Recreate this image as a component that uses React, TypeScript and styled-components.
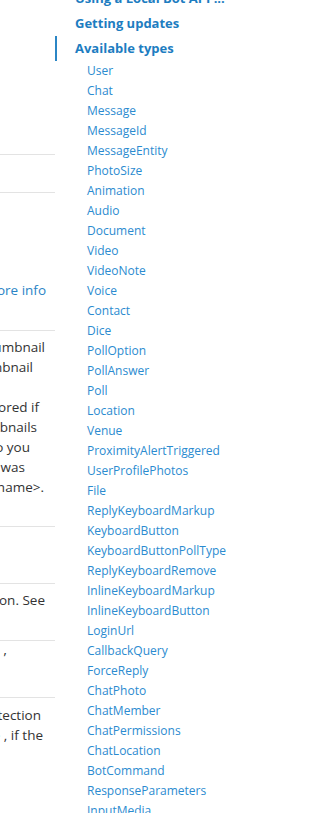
import React from "react";
import styled, { createGlobalStyle } from "styled-components";

const Global = createGlobalStyle`
  html, body { margin: 0; padding: 0; background: #fff; }
  body { font-family: "Open Sans", "Liberation Sans", sans-serif; overflow: hidden; }
`;

const Page = styled.div`
  display: flex;
  width: 336px;
  height: 813px;
  overflow: hidden;
`;

const MainClip = styled.div`
  width: 55px;
  flex-shrink: 0;
  display: flex;
  justify-content: flex-end;
  overflow: hidden;
`;

const DocTable = styled.div`
  width: 520px;
  flex-shrink: 0;
  display: flex;
  flex-direction: column;
`;

const Row = styled.div<{ $h: number; $pad: number; $first?: boolean }>`
  height: ${(p) => p.$h}px;
  border-top: ${(p) => (p.$first ? "none" : "1px solid #e3e3e3")};
  padding-top: ${(p) => p.$pad}px;
  box-sizing: border-box;
  flex-shrink: 0;
`;

const Line = styled.div<{ $end: number }>`
  font-size: 13.5px;
  line-height: 20px;
  white-space: pre;
  text-align: right;
  color: #333333;
  padding-right: ${(p) => 55 - p.$end}px;
`;

const DocLink = styled.span`
  color: #2a84c6;
`;

const Side = styled.nav`
  flex: 1;
  display: flex;
  flex-direction: column;
  margin-top: -14px;
`;

const Heading = styled.a<{ $active?: boolean }>`
  display: block;
  height: 25px;
  line-height: 25px;
  padding-left: 18px;
  border-left: 2px solid ${(p) => (p.$active ? "#2b86c5" : "transparent")};
  font-size: 13px;
  font-weight: 700;
  color: #1d7dc1;
  text-decoration: none;
  white-space: nowrap;
`;

const SubList = styled.ul`
  list-style: none;
  margin: 0;
  padding: 0 0 0 32px;
`;

const SubItem = styled.li`
  height: 20px;
  line-height: 20px;
  font-size: 12px;
  color: #2b8bd0;
  white-space: nowrap;
`;

const types = [
  "User", "Chat", "Message", "MessageId", "MessageEntity", "PhotoSize",
  "Animation", "Audio", "Document", "Video", "VideoNote", "Voice", "Contact",
  "Dice", "PollOption", "PollAnswer", "Poll", "Location", "Venue",
  "ProximityAlertTriggered", "UserProfilePhotos", "File", "ReplyKeyboardMarkup",
  "KeyboardButton", "KeyboardButtonPollType", "ReplyKeyboardRemove",
  "InlineKeyboardMarkup", "InlineKeyboardButton", "LoginUrl", "CallbackQuery",
  "ForceReply", "ChatPhoto", "ChatMember", "ChatPermissions", "ChatLocation",
  "BotCommand", "ResponseParameters", "InputMedia",
];

type L = { t: React.ReactNode; end: number };
type R = { h: number; pad: number; first?: boolean; lines: L[] };

const rows: R[] = [
  { h: 154, pad: 0, first: true, lines: [] },
  { h: 38, pad: 7, lines: [] },
  {
    h: 138, pad: 7,
    lines: [
      { t: "File to send. Pass a file_id as String to send", end: -20 },
      { t: "a file that exists on the Telegram servers", end: -40 },
      { t: "(recommended), pass an HTTP URL as a", end: -30 },
      { t: "String for Telegram to get a file from the Internet, or", end: -25 },
      {
        t: (
          <>
            upload a new one using multipart/form-data. <DocLink>More info</DocLink>
          </>
        ),
        end: 46,
      },
      { t: <DocLink>on Sending Files »</DocLink>, end: -60 },
    ],
  },
  {
    h: 196, pad: 6,
    lines: [
      { t: "Thumbnail of the file sent; can be ignored if thumbnail", end: 45 },
      { t: "generation for the file is supported server-side. The thumbnail", end: 33 },
      { t: "should be in JPEG format and less than 200 kB in size. A", end: -5 },
      { t: "thumbnail's width and height should not exceed 320. Ignored if", end: 39 },
      { t: "the file is not uploaded using multipart/form-data. Thumbnails", end: 37 },
      { t: "can't be reused and can be only uploaded as a new file, so you", end: 30 },
      { t: "can pass “attach://<file_attach_name>” if the thumbnail was", end: 25 },
      { t: "uploaded using multipart/form-data under <file_attach_name>.", end: 44 },
    ],
  },
  {
    h: 57, pad: 6,
    lines: [
      { t: "Document caption (may also be used when resending", end: -20 },
      { t: "documents by file_id), 0-1024 characters after entities", end: -30 },
    ],
  },
  {
    h: 57, pad: 6,
    lines: [
      { t: "Mode for parsing entities in the document caption. See", end: 45 },
      { t: "formatting options for more details.", end: -40 },
    ],
  },
  {
    h: 57, pad: 6,
    lines: [
      { t: "A JSON-serialized list of special entities in the caption  ’", end: 6 },
      { t: "which can be specified instead of parse_mode", end: -20 },
    ],
  },
  {
    h: 200, pad: 7,
    lines: [
      { t: "Disables automatic server-side content type detection", end: 41 },
      { t: "for files uploaded using multipart/form-data. Always true , if the", end: 43 },
      { t: "document is sent as part of an album.", end: -30 },
    ],
  },
];

export default function App() {
  return (
    <>
      <Global />
      <Page>
        <MainClip>
          <DocTable>
            {rows.map((r, i) => (
              <Row key={i} $h={r.h} $pad={r.pad} $first={r.first}>
                {r.lines.map((l, j) => (
                  <Line key={j} $end={l.end}>
                    {l.t}
                  </Line>
                ))}
              </Row>
            ))}
          </DocTable>
        </MainClip>
        <Side>
          <Heading>Using a Local Bot API ...</Heading>
          <Heading>Getting updates</Heading>
          <Heading $active>Available types</Heading>
          <SubList>
            {types.map((t) => (
              <SubItem key={t}>{t}</SubItem>
            ))}
          </SubList>
        </Side>
      </Page>
    </>
  );
}
